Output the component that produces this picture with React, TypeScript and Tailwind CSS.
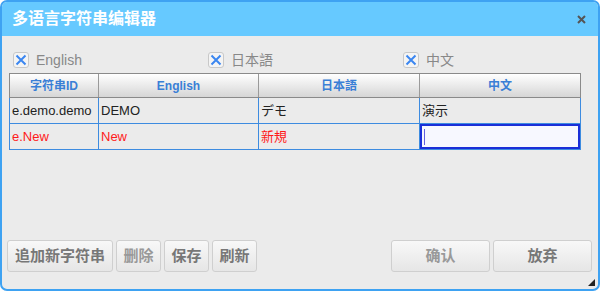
import React from "react";

const font = { fontFamily: '"Liberation Sans", Arial, "Noto Sans CJK SC", sans-serif' };

function Check({ label }: { label: string }) {
  return (
    <div className="flex items-center w-[195px]">
      <div className="w-[16px] h-[16px] rounded-[3px] border border-[#c8c8c8] bg-[#f4f4f4] flex items-center justify-center">
        <svg width="12" height="12" viewBox="0 0 12 12">
          <path d="M1.5 1.5 L10.5 10.5 M10.5 1.5 L1.5 10.5" stroke="#3b86f0" strokeWidth="2" />
        </svg>
      </div>
      <span className="ml-[7px] text-[14px] text-[#888]">{label}</span>
    </div>
  );
}

function Btn({ label, w, dim }: { label: string; w: string; dim?: boolean }) {
  return (
    <div
      className={`${w} h-[32px] flex items-center justify-center rounded-[3px] border border-[#cfcfcf] bg-gradient-to-b from-[#f8f8f8] to-[#e6e6e6] text-[15px] font-bold ${dim ? "text-[#999]" : "text-[#777]"}`}
    >
      {label}
    </div>
  );
}

export default function App() {
  return (
    <div className="w-[600px] h-[291px] bg-white" style={font}>
      <div className="w-[600px] h-[291px] rounded-[7px] border-2 border-[#3ea2f2] bg-[#ebebeb] flex flex-col overflow-hidden relative">
        <div className="h-[34px] bg-[#66c9ff] flex items-center justify-between pl-[10px] pr-[12px] shrink-0">
          <span className="text-white text-[16px] font-bold">多语言字符串编辑器</span>
          <svg width="9" height="9" viewBox="0 0 9 9">
            <path d="M1 1 L8 8 M8 1 L1 8" stroke="#555" strokeWidth="2" />
          </svg>
        </div>
        <div className="flex pl-[11px] pt-[11px] h-[37px] shrink-0">
          <Check label="English" />
          <Check label="日本語" />
          <Check label="中文" />
        </div>
        <div className="ml-[7px] w-[572px] border border-[#8a8a8a] border-b-0 shrink-0">
          <div className="grid grid-cols-[89px_160px_161px_160px] h-[24px] bg-gradient-to-b from-[#ffffff] to-[#d6d6d6] border-b border-[#8a8a8a]">
            {["字符串ID", "English", "日本語", "中文"].map((t, i) => (
              <div
                key={t}
                className={`flex items-center justify-center text-[12px] font-bold text-[#3a7fd6] ${i < 3 ? "border-r border-[#9a9a9a]" : ""}`}
              >
                {t}
              </div>
            ))}
          </div>
        </div>
        <div className="ml-[7px] w-[572px] border-l border-r border-[#3d8be0] shrink-0">
          <div className="grid grid-cols-[89px_160px_161px_160px] h-[26px] border-b border-[#3d8be0] text-[13px] text-[#222]">
            <div className="flex items-center pl-[2px] border-r border-[#3d8be0]">e.demo.demo</div>
            <div className="flex items-center pl-[2px] border-r border-[#3d8be0]">DEMO</div>
            <div className="flex items-center pl-[2px] border-r border-[#3d8be0]">デモ</div>
            <div className="flex items-center pl-[2px]">演示</div>
          </div>
          <div className="grid grid-cols-[89px_160px_161px_160px] h-[26px] border-b border-[#3d8be0] text-[13px] text-[#ff1a1a]">
            <div className="flex items-center pl-[2px] border-r border-[#3d8be0]">e.New</div>
            <div className="flex items-center pl-[2px] border-r border-[#3d8be0]">New</div>
            <div className="flex items-center pl-[2px] border-r border-[#3d8be0]">新規</div>
            <div className="border-2 border-[#1a2fd8] bg-[#f7f8ff] flex items-center pl-[2px]">
              <div className="w-[1px] h-[16px] bg-[#6060e0]" />
            </div>
          </div>
        </div>
        <div className="flex-1" />
        <div className="flex items-center pl-[5px] pr-[6px] h-[32px] mb-[17px] shrink-0">
          <div className="flex gap-[3px]">
            <Btn label="追加新字符串" w="w-[106px]" />
            <Btn label="删除" w="w-[45px]" dim />
            <Btn label="保存" w="w-[45px]" />
            <Btn label="刷新" w="w-[45px]" />
          </div>
          <div className="flex-1" />
          <div className="flex gap-[3px]">
            <Btn label="确认" w="w-[99px]" dim />
            <Btn label="放弃" w="w-[99px]" />
          </div>
        </div>
        <svg className="absolute right-[3px] bottom-[3px]" width="7" height="7" viewBox="0 0 7 7">
          <path d="M7 0 L7 7 L0 7 Z" fill="#222" />
        </svg>
      </div>
    </div>
  );
}
